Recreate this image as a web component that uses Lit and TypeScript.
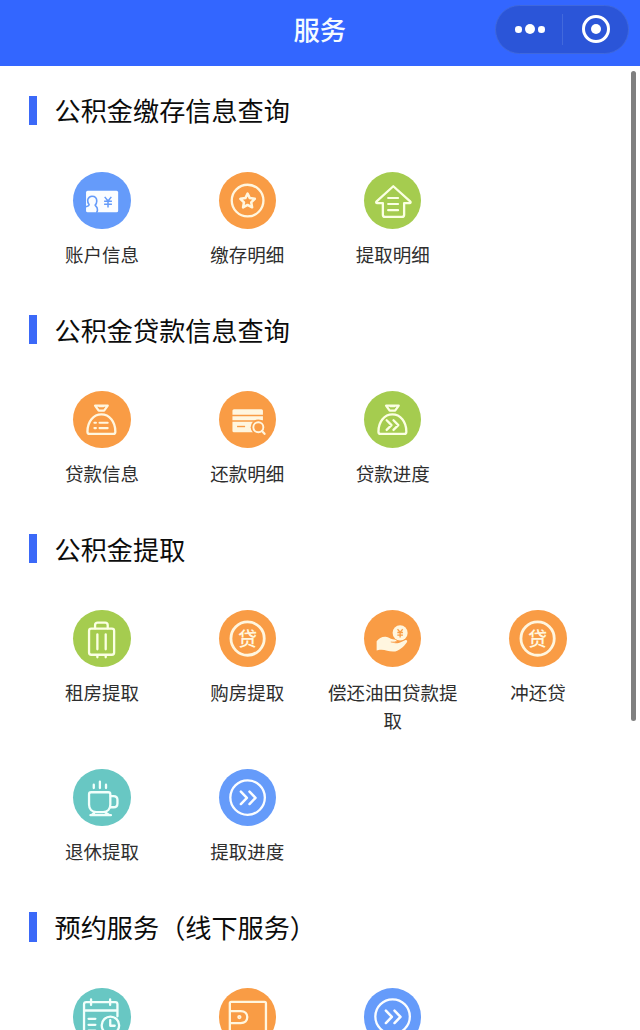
import { LitElement, html, svg, css } from "lit";
import { customElement, property } from "lit/decorators.js";

const chevrons = svg`<circle cx="28.5" cy="28.5" r="17.2" /><path d="M21.8 22.5l6 6.2-6 6.2M30.4 22.5l6 6.2-6 6.2" stroke-width="2.5"/>`;
const bag = svg`<path d="M22 14.6h12.6l-3.6 5h-5.4z"/><path d="M26.2 15.5h4.2" stroke-width="1.6"/>
  <path d="M14.4 40.5c0-10 6-17.2 13.9-17.2s13.9 7.2 13.9 17.2c0 1.4-.6 2.2-2 2.2H16.4c-1.4 0-2-.8-2-2.2z"/>`;
const loan = svg`<circle cx="28.5" cy="28.5" r="16.6" stroke-width="2.8"/><text class="glyph" x="28.5" y="35.4" font-size="19">贷</text>`;

const icons: Record<string, unknown> = {
  account: svg`<rect class="solid" x="13" y="18.8" width="32" height="21.4" rx="1.6"/>
    <path class="cut" d="M14.6 27.6c1-2.6 2.4-3.4 4.3-3.4 2.9 0 4.8 2 4.8 4.8 0 1.9-.8 3.2-1.6 4 .2 1.4 2.2 1.5 2.2 4.1v1.6c0 .8-.4 1.4-1.2 1.6M13 34.6c1.4-.4 3-.6 3.1-1.9-1.1-1.2-1.6-2.6-1.5-5.1" stroke-width="1.6"/>
    <path class="cut" d="M31.6 24.8l3.3 4.1 3.3-4.1M31 29.1h7.8M31 32.2h7.8M34.9 29v6.5" stroke-width="1.5"/>`,
  star: svg`<circle cx="28.5" cy="28.5" r="15.8"/><path d="M28.5 21.5l2.2 4.5 5 .7-3.6 3.5.9 5-4.5-2.4-4.5 2.4.9-5-3.6-3.5 5-.7z" stroke-width="2.5"/>`,
  house: svg`<path d="M29.2 14.2L12.6 29.3c-.9.9-.5 1.7.6 1.7h5.6v11.5q0 2.2 2.2 2.2h16.8q2.2 0 2.2-2.2V31h5.4c1.1 0 1.5-.8.6-1.7z"/><path d="M24 25.8h10M24 31.8h10M24 38h10" stroke-width="2"/>`,
  bagList: svg`${bag}<path d="M21.3 31.6h1.6M21.3 37h1.6M26.4 31.6h8.2M26.4 37h8.2" stroke-width="2"/>`,
  bagGo: svg`${bag}<path d="M22.6 29.2l4.8 4.8-4.8 4.8M29.4 29.2l4.8 4.8-4.8 4.8"/>`,
  card: svg`<rect class="solid" x="13.4" y="18.2" width="30.4" height="23" rx="1.5"/>
    <path class="cut" d="M13 24.3h31.5M13 29.9h31.5" stroke-width="1.5"/><path class="cut" d="M18 35.4h8" stroke-width="1.4"/>
    <circle class="badge" cx="39.2" cy="36.1" r="7.6"/><circle cx="39.2" cy="36.1" r="5" stroke-width="1.9"/><path d="M42.8 39.9l2.6 2.8" stroke-width="2.2"/>`,
  suitcase: svg`<rect x="16" y="18.6" width="25" height="26" rx="2.2"/><path d="M22 18.2v-3.1q0-2.6 2.6-2.6h7.4q2.6 0 2.6 2.6v3.1M24.3 24.2v15M32.6 24.2v15M24.3 45v2.1M32.6 45v2.1"/>`,
  loan,
  hand: svg`<circle class="solid" cx="36" cy="22.8" r="7.5"/><path class="cut" d="M33.4 19.2l2.6 2.8 2.6-2.8M33.2 22.4h5.6M33.2 25h5.6M36 22.4v5" stroke-width="1.3"/>
    <path class="solid" d="M12.6 31.2c2-2.8 5.2-4.7 9-4.5 3.4.2 4.2 2.1 7 2.4 2.2.2 3.6.3 3.9 1.6.3 1.5-2.2 1.9-5.1 1.8 3.6 1.3 7.2.8 9.7-.5l3.8-1.9c1.7-.7 2.9.7 1.7 2.2-2.9 4.2-8.1 9-13.3 9.1-4.5.1-8-1.9-12.3-1.8-1.9 0-3.2.3-4.4.7z"/><path class="cut" d="M26.7 31.9c3 .4 5.6 0 5.8-1.1" stroke-width=".8"/>`,
  cup: svg`<path d="M16 25.2q0-2 2-2h17.2q2 0 2 2v10.3c0 4.5-2.9 7.5-7.2 7.5h-6.8c-4.3 0-7.2-3-7.2-7.5z"/><path d="M37.6 27h2.8c2.5 0 3.9 1.5 3.9 3.7v3.6c0 2.3-1.4 3.8-3.9 3.8h-3M17.4 46h20.4M21.7 43.2l-2.8 2.6M31.8 43.2l4.3 2.6M20.7 15.6v3.4M26.8 12.6v6.4M32.9 15.6v3.4"/>`,
  go: chevrons,
  calendar: svg`<path d="M28 48H13.2q-2.2 0-2.2-2.2V16.2q0-2.2 2.2-2.2h28.9q2.2 0 2.2 2.2v12M11 22.4h33M18 11.3v5.6M37 11.3v5.6M15.5 30.7h6.8M15.5 36.7h6.8M15.5 42.4h6.8"/><circle cx="37.3" cy="37.2" r="8.7"/><path d="M37.1 32v5.6h4.5"/>`,
  wallet: svg`<rect x="10.8" y="13.8" width="36" height="31" rx="1.4"/><path d="M11 23h10.6c4.3 0 6.6 2.7 6.6 6s-2.3 6-6.6 6H11"/><circle cx="20.3" cy="29" r="1.3" stroke-width="1.7"/>`,
};

interface Service { label: string; icon: string; tone: string; }
interface Group { title: string; items: Service[]; }

const s = (label: string, icon: string, tone: string): Service => ({ label, icon, tone });

const groups: Group[] = [
  { title: "公积金缴存信息查询", items: [s("账户信息", "account", "blue"), s("缴存明细", "star", "orange"), s("提取明细", "house", "green")] },
  { title: "公积金贷款信息查询", items: [s("贷款信息", "bagList", "orange"), s("还款明细", "card", "orange"), s("贷款进度", "bagGo", "green")] },
  {
    title: "公积金提取",
    items: [
      s("租房提取", "suitcase", "green"), s("购房提取", "loan", "orange"), s("偿还油田贷款提取", "hand", "orange"),
      s("冲还贷", "loan", "orange"), s("退休提取", "cup", "teal"), s("提取进度", "go", "blue"),
    ],
  },
  { title: "预约服务（线下服务）", items: [s("", "calendar", "teal"), s("", "wallet", "orange"), s("", "go", "blue")] },
];

@customElement("service-item")
export class ServiceItem extends LitElement {
  @property({ attribute: false }) item!: Service;

  static styles = css`
    :host { display: flex; flex-direction: column; align-items: center; }
    .disc { width: 57.2px; height: 57.2px; border-radius: 50%; background: var(--tone); flex: none; }
    .blue { --tone: #659bfa; --ink: #fbfdff; }
    .orange { --tone: #f99c45; --ink: #fff6df; }
    .green { --tone: #a5cc4f; --ink: #fbffe3; }
    .teal { --tone: #68c7c3; --ink: #f1fffb; }
    svg { display: block; width: 100%; height: 100%; fill: none; stroke: var(--ink); stroke-width: 2.3; stroke-linecap: round; stroke-linejoin: round; }
    .solid { fill: var(--ink); stroke: none; }
    .cut { stroke: var(--tone); stroke-linecap: butt; }
    .badge { fill: var(--tone); stroke: none; }
    .glyph { fill: var(--ink); stroke: none; text-anchor: middle; font-weight: 500; }
    .label { margin-top: 11.1px; width: 131px; text-align: center; font-size: 18.5px; line-height: 28px; color: #2e2e2e; }
  `;

  render() {
    const { label, icon, tone } = this.item;
    return html`<div class="disc ${tone}"><svg viewBox="0 0 57 57">${icons[icon]}</svg></div>
      <div class="label">${label}</div>`;
  }
}

@customElement("app-root")
export class AppRoot extends LitElement {
  static styles = css`
    :host {
      display: block; position: relative; height: 1030px; overflow: hidden; background: #fff;
      font-family: "Noto Sans CJK SC", "Noto Sans", sans-serif;
    }
    .bar {
      height: 66px; box-sizing: border-box; padding: 5px 10.6px 0 0; background: #3366ff;
      display: grid; grid-template-columns: 1fr auto 1fr; align-items: start;
    }
    .title { grid-column: 2; margin-left: 10px; font-size: 26.3px; font-weight: 500; line-height: 47px; color: #f4fbff; }
    .capsule {
      justify-self: end; box-sizing: border-box; width: 134px; height: 48.5px; border-radius: 25px;
      background: #2b55d8; border: 1px solid #3f68dd; display: flex; align-items: center;
    }
    .half { flex: 1; display: flex; align-items: center; justify-content: center; gap: 3px; padding-left: 1.5px; }
    .rule { width: 1px; height: 31px; background: #4269dc; }
    .dot { width: 6.6px; height: 6.6px; border-radius: 50%; background: #fff; }
    .big { width: 10px; height: 10px; }
    .target { width: 28px; height: 28px; box-sizing: border-box; border: 3px solid #fff; border-radius: 50%; display: flex; align-items: center; justify-content: center; }
    .core { width: 10px; height: 10px; border-radius: 50%; background: #fff; }
    .page { padding: 29.6px 29.4px 0; }
    .group { margin-bottom: 46.3px; }
    .heading { display: flex; align-items: center; height: 29.3px; gap: 17.2px; margin-bottom: 46.7px; }
    .mark { width: 8px; height: 29.3px; background: #3b69f8; }
    .name { font-size: 26.15px; line-height: 29.3px; font-weight: 400; margin: 0; color: #0c0c0c; white-space: nowrap; position: relative; top: 0.8px; }
    .items { display: grid; grid-template-columns: repeat(4, 1fr); row-gap: 34.8px; padding-bottom: 0.7px; }
    .thumb { position: absolute; right: 4.5px; top: 70.5px; width: 5px; height: 650px; border-radius: 3px; background: #808080; }
  `;

  render() {
    return html`
      <header class="bar">
        <div class="title">服务</div>
        <div class="capsule">
          <div class="half"><span class="dot"></span><span class="dot big"></span><span class="dot"></span></div>
          <div class="rule"></div>
          <div class="half"><div class="target"><span class="core"></span></div></div>
        </div>
      </header>
      <main class="page">
        ${groups.map((g) => html`<section class="group">
          <div class="heading"><span class="mark"></span><h2 class="name">${g.title}</h2></div>
          <div class="items">${g.items.map((i) => html`<service-item .item=${i}></service-item>`)}</div>
        </section>`)}
      </main>
      <div class="thumb"></div>
    `;
  }
}
